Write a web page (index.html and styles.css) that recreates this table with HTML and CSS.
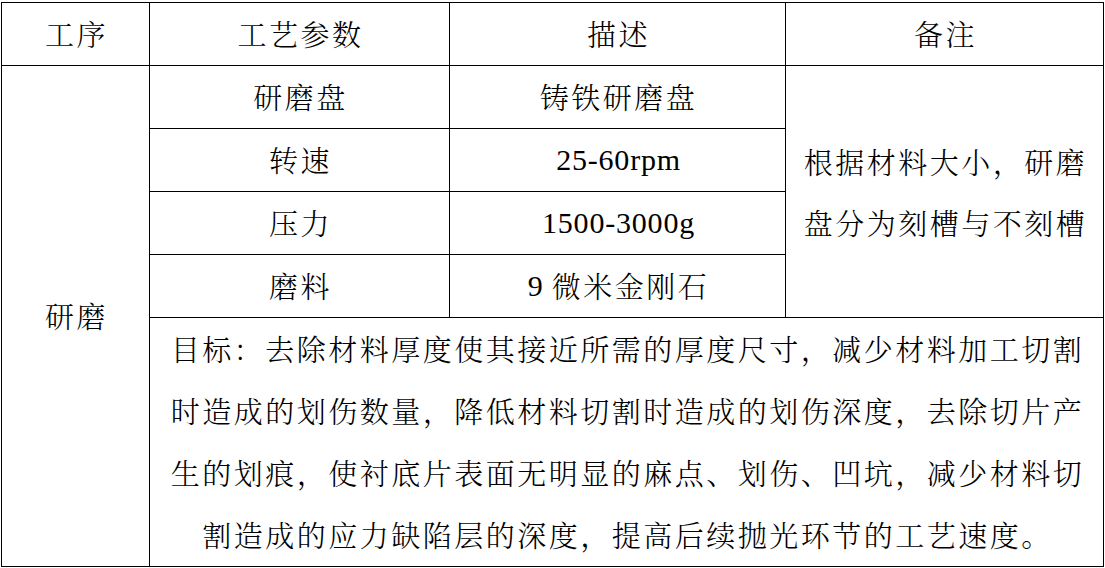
FILE: index.html
```html
<!DOCTYPE html>
<html lang="zh-CN">
<head>
<meta charset="utf-8">
<title>研磨工艺参数</title>
<link rel="stylesheet" href="styles.css">
</head>
<body>
<div class="page">
  <div class="table">
    <div class="cell head">工序</div>
    <div class="cell head">工艺参数</div>
    <div class="cell head">描述</div>
    <div class="cell head">备注</div>

    <div class="cell step">研磨</div>
    <div class="cell">研磨盘</div>
    <div class="cell">铸铁研磨盘</div>
    <div class="cell note">根据材料大小，研磨盘分为刻槽与不刻槽</div>

    <div class="cell">转速</div>
    <div class="cell"><span class="num">25-60rpm</span></div>

    <div class="cell">压力</div>
    <div class="cell"><span class="num">1500-3000g</span></div>

    <div class="cell">磨料</div>
    <div class="cell"><span class="num">9 </span>微米金刚石</div>

    <div class="cell goal">目标：去除材料厚度使其接近所需的厚度尺寸，减少材料加工切割时造成的划伤数量，降低材料切割时造成的划伤深度，去除切片产生的划痕，使衬底片表面无明显的麻点、划伤、凹坑，减少材料切割造成的应力缺陷层的深度，提高后续抛光环节的工艺速度。</div>
  </div>
</div>
</body>
</html>
```

FILE: styles.css
```css
html, body {
  margin: 0;
  padding: 0;
  background: #ffffff;
}

.page {
  padding: 2px 0 0 1px;
}

.table {
  display: grid;
  width: 1103px;
  box-sizing: border-box;
  grid-template-columns: 147px 299px 335px 317px;
  grid-template-rows: 62px 62px 62px 62px 62px 248px;
  gap: 1px;
  padding: 1px;
  background: #000000;
  font-family: "Noto Serif CJK SC", "Noto Sans CJK SC", sans-serif;
  font-size: 29px;
  font-weight: 300;
  letter-spacing: 2.5px;
  color: #000000;
}

.cell {
  background: #ffffff;
  display: flex;
  align-items: center;
  justify-content: center;
  text-align: center;
  line-height: 62px;
  padding-left: 2px;
}

.step {
  grid-column: 1;
  grid-row: 2 / 7;
}

.note {
  grid-column: 4;
  grid-row: 2 / 6;
  padding: 0 10px 0 12px;
  line-height: 61px;
}

.goal {
  grid-column: 2 / 5;
  grid-row: 6;
  padding: 0 17px 0 19px;
  line-height: 62px;
}

.num {
  font-family: "Liberation Serif", serif;
  font-size: 30px;
  font-weight: 400;
  letter-spacing: 0.8px;
  white-space: pre;
}
```
